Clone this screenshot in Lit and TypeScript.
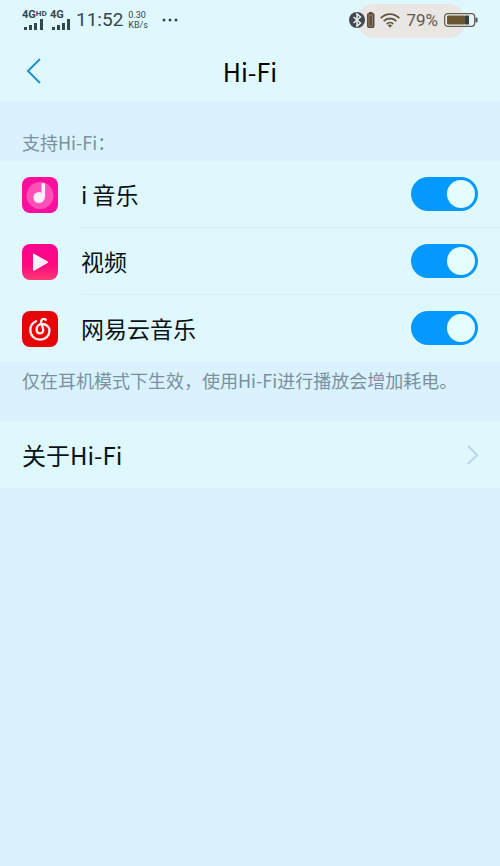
import { LitElement, html, svg, css } from "lit";
import { customElement, property, state } from "lit/decorators.js";

const musicIcon = svg`
  <svg viewBox="0 0 36 36" width="36" height="36" aria-hidden="true">
    <rect width="36" height="36" rx="8" fill="#fb0f9c"/>
    <circle cx="18" cy="18.500" r="13.500" fill="#ff50b8"/>
    <circle cx="17" cy="20.500" r="5.600" fill="#ffeefa"/>
    <path d="M19.500 21V7.500a1.800 1.800 0 0 1 3.600 0V20.500a6 6 0 0 1-3.600 4z" fill="#ffeefa"/>
  </svg>`;

const videoIcon = svg`
  <svg viewBox="0 0 36 36" width="36" height="36" aria-hidden="true">
    <defs>
      <linearGradient id="v" x1="0" y1="0" x2="0" y2="1">
        <stop offset="0" stop-color="#fd0392"/>
        <stop offset=".6" stop-color="#fd0a80"/>
        <stop offset="1" stop-color="#ff3a74"/>
      </linearGradient>
      <linearGradient id="p" x1="0" y1="0" x2="1" y2="1">
        <stop offset="0" stop-color="#fff"/>
        <stop offset="1" stop-color="#ffd9ec"/>
      </linearGradient>
    </defs>
    <rect width="36" height="36" rx="8" fill="url(#v)"/>
    <path d="M11.500 10v16.500L26 18.200z" fill="url(#p)" stroke="#fff" stroke-width="1" stroke-linejoin="round"/>
  </svg>`;

const cloudIcon = svg`
  <svg viewBox="0 0 36 36" width="36" height="36" aria-hidden="true">
    <rect width="36" height="36" rx="8" fill="#e60508"/>
    <g fill="none" stroke="#fff0ee" stroke-width="2.300" stroke-linecap="round">
      <path d="M14 10.300A9.600 9.600 0 0 0 8.300 19c0 5.800 4.400 9.700 9.700 9.700s9.500-4 9.500-8.900c0-4.200-3.400-6.800-7.200-6.800-3.400 0-5.700 2.400-5.700 5.200 0 2.500 1.500 4.200 3.500 4.200 2.300 0 3.500-2 3-4.200L19.200 11.200c-.5-2.700 2-4.300 4.600-2.400"/>
    </g>
  </svg>`;

@customElement("hifi-switch")
export class HifiSwitch extends LitElement {
  @property() label = "";
  @state() private on = true;

  static styles = css`
    :host { display: block; }
    .switch {
      appearance: none;
      display: flex;
      align-items: center;
      justify-content: flex-start;
      box-sizing: border-box;
      width: 67px;
      height: 34px;
      margin: 0;
      padding: 3px;
      border-radius: 17px;
      background: #b9cdd8;
      cursor: pointer;
    }
    .switch::before {
      content: "";
      width: 28px;
      height: 28px;
      border-radius: 50%;
      background: #e4fdfe;
    }
    .switch:checked {
      justify-content: flex-end;
      background: #0499fe;
    }
  `;

  render() {
    return html`<input class="switch" type="checkbox" role="switch" aria-label=${this.label}
      .checked=${this.on}
      @change=${(e: Event) => (this.on = (e.target as HTMLInputElement).checked)} />`;
  }
}

@customElement("status-bar")
export class StatusBar extends LitElement {
  static styles = css`
    :host {
      display: flex;
      align-items: center;
      justify-content: space-between;
      height: 40px;
      padding: 0 22px;
      color: #34474f;
      font-family: Roboto, "Noto Sans CJK SC", sans-serif;
    }
    .group { display: flex; align-items: center; }
    .signals { display: flex; gap: 4px; }
    .signal { display: flex; flex-direction: column; align-items: flex-start; width: 24px; }
    .signal:last-child { width: 21px; }
    .net { display: flex; font-size: 11px; line-height: 8px; font-weight: 700; }
    .hd { font-size: 8px; line-height: 6px; }
    .time { font-size: 19px; line-height: 24px; margin-left: 5px; }
    .speed { font-size: 9px; line-height: 10px; margin-left: 5px; }
    .more { margin-left: 13px; }
    .pill { position: relative; color: #62584f; }
    .pill::before {
      content: "";
      position: absolute;
      left: 8px;
      right: 12px;
      top: -6px;
      height: 34px;
      border-radius: 17px;
      background: #e9e6e4;
    }
    .pill > * { position: relative; }
    .wifi { margin-left: 5px; }
    .percent { font-size: 17px; line-height: 20px; margin: 0 6px; }
    svg { display: block; }
  `;

  private bars(width: number, tall: number) {
    return svg`<svg width=${width} height="11" viewBox="0 0 ${width} 11" aria-hidden="true">
      <g fill="currentColor">
        <rect x="2" y="8" width="3" height="3"/>
        <rect x="7" y="6" width="3" height="5"/>
        <rect x="12" y="4" width="3" height="7"/>
        <rect x=${tall} y="0" width="3" height="11"/>
      </g></svg>`;
  }

  render() {
    return html`
      <div class="group">
        <div class="signals">
          <div class="signal">
            <span class="net">4G<span class="hd">HD</span></span>${this.bars(24, 18)}
          </div>
          <div class="signal"><span class="net">4G</span>${this.bars(21, 17)}</div>
        </div>
        <span class="time">11:52</span>
        <div class="speed"><div>0.30</div><div>KB/s</div></div>
        <svg class="more" width="18" height="4" viewBox="0 0 18 4" aria-hidden="true">
          <g fill="currentColor"><circle cx="3" cy="2" r="1.500"/><circle cx="9" cy="2" r="1.500"/><circle cx="15" cy="2" r="1.500"/></g>
        </svg>
      </div>
      <div class="group pill">
        <svg width="26" height="16" viewBox="0 0 26 16" aria-hidden="true">
          <circle cx="8" cy="8" r="8" fill="#42484f"/>
          <path d="M4.500 5l7 6L8 14V2l3.500 3-7 6" fill="none" stroke="#e9efef" stroke-width="1.500"/>
          <path d="M20 .5h3.500" stroke="#574d46"/>
          <rect x="18.500" y="1.500" width="6.500" height="14" rx="1" fill="#62513a" stroke="#574d46"/>
          <rect x="20" y="3" width="3.500" height="11" fill="none" stroke="#9b8e80" stroke-width=".7"/>
        </svg>
        <svg class="wifi" width="20" height="15" viewBox="0 0 20 15" aria-hidden="true">
          <g fill="none" stroke="#635746" stroke-width="1.900">
            <path d="M.7 5.200C6-.3 14-.3 19.300 5.200M3.700 8.200c3.500-3.600 9.100-3.600 12.600 0M6.700 11c1.900-1.900 4.700-1.900 6.600 0"/>
          </g>
          <path d="M7.800 12.300c1.300-1 3.100-1 4.400 0L10 14.700z" fill="#635746"/>
        </svg>
        <span class="percent">79%</span>
        <svg width="34" height="14" viewBox="0 0 34 14" aria-hidden="true">
          <rect x=".7" y=".7" width="30" height="12.600" rx="3" fill="#e6f3f2" stroke="#675f50" stroke-width="1.300"/>
          <rect x="3" y="2.500" width="18" height="9" rx="1" fill="#6a5630"/>
          <rect x="21" y="2.500" width="4" height="9" fill="#344044"/>
          <rect x="31.500" y="4.500" width="2" height="5" rx="1" fill="#485457"/>
        </svg>
      </div>`;
  }
}

@customElement("app-root")
export class AppRoot extends LitElement {
  static styles = css`
    :host {
      display: block;
      min-height: 100vh;
      background: #d9f2fe;
      color: #091216;
      font-family: "Noto Sans CJK SC", sans-serif;
    }
    .top { background: #dff8fe; }
    .nav {
      display: grid;
      grid-template-columns: 1fr auto 1fr;
      align-items: center;
      height: 61px;
      padding: 0 22px;
    }
    .back {
      display: flex;
      justify-self: start;
      padding: 4px;
      border: 0;
      background: none;
      color: #2593cc;
      cursor: pointer;
    }
    .title { margin: 0; font-size: 25px; line-height: 32px; font-weight: 400; color: #000; }
    .caption, .note { margin: 0; padding: 0 22px; font-size: 18px; line-height: 24px; color: #7b909d; }
    .caption { padding-top: 29px; padding-bottom: 7px; font-weight: 400; }
    .note { padding-top: 6px; padding-bottom: 29px; }
    .list { margin: 0; padding: 0; list-style: none; background: #dff8fe; }
    .item { display: flex; align-items: center; padding-left: 22px; }
    .body {
      display: flex;
      flex: 1;
      align-items: center;
      justify-content: space-between;
      box-sizing: border-box;
      height: 67px;
      margin-left: 23px;
      padding-right: 22px;
      border-bottom: 1px solid #d7eef6;
    }
    .item:last-child .body { border-bottom-color: transparent; }
    .name { font-size: 23px; line-height: 32px; }
    .about {
      display: flex;
      align-items: center;
      justify-content: space-between;
      height: 67px;
      padding: 0 22px;
      background: #dff8fe;
      color: inherit;
      font-size: 24px;
      line-height: 32px;
      text-decoration: none;
    }
    .chevron { color: #bed5e7; }
    svg { display: block; }
  `;

  private apps = [
    { name: "i 音乐", icon: musicIcon },
    { name: "视频", icon: videoIcon },
    { name: "网易云音乐", icon: cloudIcon },
  ];

  render() {
    return html`
      <header class="top">
        <status-bar></status-bar>
        <div class="nav">
          <button class="back" aria-label="返回">
            <svg width="16" height="26" viewBox="0 0 16 26" fill="none" stroke="currentColor" stroke-width="2">
              <path d="M14 1L2 13l12 12"/>
            </svg>
          </button>
          <h1 class="title">Hi-Fi</h1>
        </div>
      </header>
      <main>
        <h2 class="caption">支持Hi-Fi：</h2>
        <ul class="list">
          ${this.apps.map((app) => html`
            <li class="item">
              ${app.icon}
              <div class="body">
                <span class="name">${app.name}</span>
                <hifi-switch .label=${app.name}></hifi-switch>
              </div>
            </li>`)}
        </ul>
        <p class="note">仅在耳机模式下生效，使用Hi-Fi进行播放会增加耗电。</p>
        <a class="about" href="#about">
          <span>关于Hi-Fi</span>
          <svg class="chevron" width="12" height="20" viewBox="0 0 12 20" fill="none" stroke="currentColor" stroke-width="2">
            <path d="M2 1l9 9-9 9"/>
          </svg>
        </a>
      </main>`;
  }
}
